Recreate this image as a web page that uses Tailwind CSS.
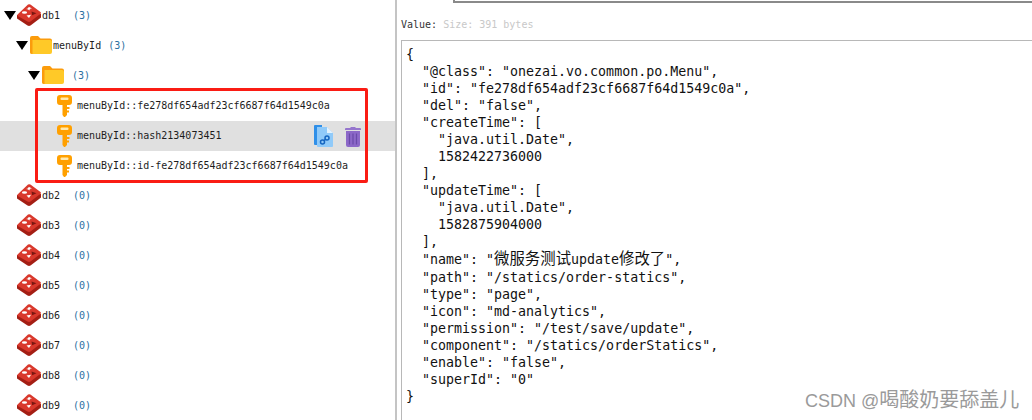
<!DOCTYPE html>
<html>
<head>
<meta charset="utf-8">
<script src="https://cdn.jsdelivr.net/npm/@tailwindcss/browser@4"></script>
</head>
<body class="bg-white">
<svg width="0" height="0" class="absolute">
<defs>
<symbol id="redis" viewBox="0 0 24 22">
<path d="M0 11v3.500L10.500 21.500q1.500 .8 3 0L24 13.500V10z" fill="#a41e14"/>
<path d="M11 .5q1.200-.6 2.400 0L23.500 8q.8 1 0 1.800L13.500 17.500q-1.500 .8-3 0L.8 12q-1-1 0-1.800z" fill="#d9382c"/>
<path d="M11 3.500l2.500-.5-.4 1.200 2 .6-2.300.5-.5 1.300-1.200-1.200-2-.3 1.700-.6z" fill="#fff"/>
<ellipse cx="7.500" cy="8.500" rx="2.600" ry="1.300" fill="#fff"/>
<path d="M14.500 7.500l5 1.800-4.300 1.900z" fill="#7a1610"/>
<path d="M9.500 11.500l4.500-.8-2 3.400z" fill="#fff"/>
</symbol>
<symbol id="folder" viewBox="0 0 22 18">
<path d="M0 2q0-2 2-2h6l2.500 2.500H20q2 0 2 2V8H0z" fill="#fb9c0c"/>
<path d="M0 16V6q0-2 2-2h18q2 0 2 2v10q0 2-2 2H2q-2 0-2-2z" fill="#ffc928"/>
<path d="M0 3h2.500v15H2q-2 0-2-2z" fill="#fb9c0c"/>
</symbol>
<symbol id="key" viewBox="0 0 15 22">
<path d="M3 0h9q3 0 3 3v4q0 3-3 3h-2v10l-2 2H7l-1.500-2V10H3q-3 0-3-3V3q0-3 3-3z" fill="#ffa000"/>
<path d="M10 12h2.500v2H10zM10 15.500h2v2h-2z" fill="#ffa000"/>
<rect x="3.500" y="2.500" width="8" height="2.500" rx="1" fill="#ffe9b0"/>
</symbol>
</defs>
</svg>

<div class="relative flex h-[420px] w-[1032px] overflow-hidden font-['DejaVu_Sans_Mono',monospace]">
  <div class="w-[395px] shrink-0 text-[10px] text-[#1d1d1d]">
    <div class="flex h-[30px] items-center pl-[4px]">
      <div class="h-0 w-0 border-x-[6px] border-t-[9px] border-x-transparent border-t-black"></div>
      <svg class="ml-px h-[22px] w-[24px]"><use href="#redis"/></svg>
      <span class="ml-px">db1</span><span class="ml-[13px] text-[#2c6f9f]">(3)</span>
    </div>
    <div class="flex h-[30px] items-center pl-[16px]">
      <div class="h-0 w-0 border-x-[6px] border-t-[9px] border-x-transparent border-t-black"></div>
      <svg class="ml-[2px] h-[18px] w-[22px]"><use href="#folder"/></svg>
      <span class="ml-px">menuById</span><span class="ml-[7px] text-[#2c6f9f]">(3)</span>
    </div>
    <div class="flex h-[30px] items-center pl-[28px]">
      <div class="h-0 w-0 border-x-[6px] border-t-[9px] border-x-transparent border-t-black"></div>
      <svg class="ml-[2px] h-[18px] w-[22px]"><use href="#folder"/></svg>
      <span class="ml-[8px] text-[#2c6f9f]">(3)</span>
    </div>
    <div class="flex h-[31px] items-center pl-[57px] pt-px">
      <svg class="h-[22px] w-[15px]"><use href="#key"/></svg>
      <span class="ml-[5px] -translate-y-px">menuById::fe278df654adf23cf6687f64d1549c0a</span>
    </div>
    <div class="flex h-[30px] items-center bg-[#e0e0e0] pl-[57px]">
      <svg class="h-[22px] w-[15px]"><use href="#key"/></svg>
      <span class="ml-[5px] -translate-y-px">menuById::hash2134073451</span>
      <svg class="ml-auto h-[22px] w-[19px]" viewBox="0 0 19 22">
        <path d="M0 1q0-1 1-1h7v20H1q-1 0-1-1z" fill="#2f8fe8"/>
        <path d="M3 2h10l6 6v13q0 1-1 1H4q-1 0-1-1z" fill="#90caf9"/>
        <path d="M13 2l6 6h-6z" fill="#e3f2fd"/>
        <g fill="none" stroke="#1565c0" stroke-width="1.500"><circle cx="8.500" cy="17" r="2"/><circle cx="13" cy="13" r="2"/><path d="M10 15.500l1.500-1.200"/></g>
      </svg>
      <svg class="ml-[12px] mr-[34px] h-[21px] w-[16px]" viewBox="0 0 16 21">
        <path d="M1 2h4.500V1h5v1H15q1 0 1 1v1H0V3q0-1 1-1z" fill="#9575cd"/>
        <path d="M1 5h14v14q0 2-2 2H3q-2 0-2-2z" fill="#8c68c8"/>
        <path d="M4.500 7.500v11M8 7.500v11M11.500 7.500v11" stroke="#6a4aa8" stroke-width="1.200"/>
      </svg>
    </div>
    <div class="flex h-[29px] items-center pl-[57px] pt-px">
      <svg class="h-[22px] w-[15px]"><use href="#key"/></svg>
      <span class="ml-[5px] -translate-y-px">menuById::id-fe278df654adf23cf6687f64d1549c0a</span>
    </div>
    <div class="flex h-[30px] items-center pl-[17px]"><svg class="h-[22px] w-[24px]"><use href="#redis"/></svg><span class="ml-px">db2</span><span class="ml-[13px] text-[#2c6f9f]">(0)</span></div>
    <div class="flex h-[30px] items-center pl-[17px]"><svg class="h-[22px] w-[24px]"><use href="#redis"/></svg><span class="ml-px">db3</span><span class="ml-[13px] text-[#2c6f9f]">(0)</span></div>
    <div class="flex h-[30px] items-center pl-[17px]"><svg class="h-[22px] w-[24px]"><use href="#redis"/></svg><span class="ml-px">db4</span><span class="ml-[13px] text-[#2c6f9f]">(0)</span></div>
    <div class="flex h-[30px] items-center pl-[17px]"><svg class="h-[22px] w-[24px]"><use href="#redis"/></svg><span class="ml-px">db5</span><span class="ml-[13px] text-[#2c6f9f]">(0)</span></div>
    <div class="flex h-[30px] items-center pl-[17px]"><svg class="h-[22px] w-[24px]"><use href="#redis"/></svg><span class="ml-px">db6</span><span class="ml-[13px] text-[#2c6f9f]">(0)</span></div>
    <div class="flex h-[30px] items-center pl-[17px]"><svg class="h-[22px] w-[24px]"><use href="#redis"/></svg><span class="ml-px">db7</span><span class="ml-[13px] text-[#2c6f9f]">(0)</span></div>
    <div class="flex h-[30px] items-center pl-[17px]"><svg class="h-[22px] w-[24px]"><use href="#redis"/></svg><span class="ml-px">db8</span><span class="ml-[13px] text-[#2c6f9f]">(0)</span></div>
    <div class="flex h-[30px] items-center pl-[17px]"><svg class="h-[22px] w-[24px]"><use href="#redis"/></svg><span class="ml-px">db9</span><span class="ml-[13px] text-[#2c6f9f]">(0)</span></div>
  </div>
  <div class="flex min-w-0 flex-1 flex-col border-l-2 border-[#c4c4c4] pl-[4px]">
    <div class="ml-[52px] h-[3px] w-full shrink-0 border-b-2 border-l-2 border-[#8a8a8a]"></div>
    <div class="flex h-[37px] shrink-0 items-center gap-[6px] pt-[6px] text-[10px]">
      <span class="text-[#333]">Value:</span><span class="text-[#c8c8c8]">Size: 391 bytes</span>
    </div>
    <div class="min-h-0 flex-1 border-l border-t border-[#b8b8b8] pl-[4px] pt-[5px] font-['DejaVu_Sans_Mono','Noto_Sans_CJK_SC',monospace] text-[13.3px] leading-[17px] text-[#111]">
      <div>{</div>
      <div class="pl-[16px]">"@class": "onezai.vo.common.po.Menu",</div>
      <div class="pl-[16px]">"id": "fe278df654adf23cf6687f64d1549c0a",</div>
      <div class="pl-[16px]">"del": "false",</div>
      <div class="pl-[16px]">"createTime": [</div>
      <div class="pl-[32px]">"java.util.Date",</div>
      <div class="pl-[32px]">1582422736000</div>
      <div class="pl-[16px]">],</div>
      <div class="pl-[16px]">"updateTime": [</div>
      <div class="pl-[32px]">"java.util.Date",</div>
      <div class="pl-[32px]">1582875904000</div>
      <div class="pl-[16px]">],</div>
      <div class="flex h-[19px] items-center whitespace-pre pl-[16px]"><span>"name": "</span><span class="text-[15.4px]">微服务测试</span><span>update</span><span class="text-[15.4px]">修改了</span><span>",</span></div>
      <div class="pl-[16px]">"path": "/statics/order-statics",</div>
      <div class="pl-[16px]">"type": "page",</div>
      <div class="pl-[16px]">"icon": "md-analytics",</div>
      <div class="pl-[16px]">"permission": "/test/save/update",</div>
      <div class="pl-[16px]">"component": "/statics/orderStatics",</div>
      <div class="pl-[16px]">"enable": "false",</div>
      <div class="pl-[16px]">"superId": "0"</div>
      <div>}</div>
    </div>
  </div>
  <div class="absolute left-[35px] top-[88px] h-[95px] w-[333px] rounded-[2px] border-[3px] border-[#fa1c14]"></div>
  <div class="absolute left-[805px] top-[388px] flex items-baseline font-['Liberation_Sans','Noto_Sans_CJK_SC',sans-serif] text-[18px] leading-[24px] text-[#9a9a9a]"><span class="whitespace-pre">CSDN @</span><span class="text-[20px]">喝酸奶要舔盖儿</span></div>
</div>
</body>
</html>
